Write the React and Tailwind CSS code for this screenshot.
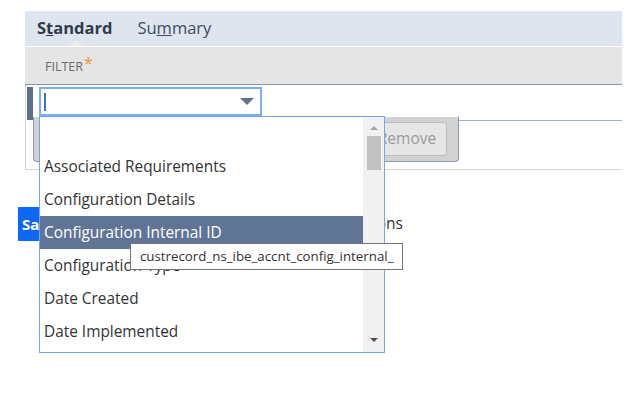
import React from "react";

const items = [
  "",
  "Associated Requirements",
  "Configuration Details",
  "Configuration Internal ID",
  "Configuration Type",
  "Date Created",
  "Date Implemented",
];

export default function App() {
  return (
    <div
      className="relative w-[640px] h-[400px] bg-white overflow-hidden text-[#333]"
      style={{ fontFamily: '"Open Sans", "Noto Sans", sans-serif' }}
    >
      <div className="pt-[11px] pl-[25px]">
        <div className="w-[597px]">
          {/* tabs */}
          <div className="relative h-[35px] bg-[#dfe5ee] flex items-center pl-[12px] gap-[25px] text-[16.5px]">
            <span className="font-bold text-[#2f3b4c]">
              S<span className="underline">t</span>andard
            </span>
            <span className="text-[#3d4b60]">
              Su<span className="underline">m</span>mary
            </span>
            <div className="absolute left-[44px] bottom-0 w-0 h-0 border-l-[7px] border-r-[7px] border-b-[6px] border-l-transparent border-r-transparent border-b-[#eeeeee]" />
          </div>
          {/* filter header */}
          <div className="mt-px h-[38px] bg-[#e5e5e5] border-b border-[#8397b5] flex items-center pt-[4px] pl-[20px] text-[12.5px] text-[#6b6b6b]">
            FILTER
            <span className="text-[#e39a2b] text-[16px] leading-none -mt-[9px] ml-px">*</span>
          </div>
          {/* body */}
          <div className="h-[85px] border-l border-b border-[#d4d4d4]">
            <div className="flex pt-[2px]">
              <div className="ml-[1px] w-[6px] h-[33px] bg-[#5a6f8f]" />
              <div className="ml-[6px] w-[223px] h-[29px] border-2 border-[#7aaef0] bg-white flex items-center justify-between pl-[3px] pr-[6px]">
                <div className="w-[2px] h-[18px] bg-[#3b6fd4]" />
                <div className="w-0 h-0 border-l-[7px] border-r-[7px] border-t-[7px] border-l-transparent border-r-transparent border-t-[#5f7390]" />
              </div>
            </div>
            <div className="flex -mt-[3px]">
              <div className="ml-[7px] w-[426px] h-[45px] bg-[#d2d2d2] border border-t-0 border-[#8a9ab0] rounded-b-[4px] flex justify-end items-start pt-[5px] pr-[11px]">
                <div className="w-[80px] h-[34px] bg-[#e6e6e6] border border-[#bdbdbd] rounded-[3px] flex items-center justify-center text-[15.5px] text-[#9a9a9a]">
                  Remove
                </div>
              </div>
              <div className="flex-1 border-t border-[#9fb1cc] mt-[3px]" />
            </div>
          </div>
        </div>
      </div>

      {/* action row */}
      <div className="mt-[37px] pl-[18px] flex items-center">
        <div className="w-[23px] h-[34px] bg-[#0f67f5] text-white font-bold text-[15px] flex items-center pl-[4px] overflow-hidden">
          Sa
        </div>
        <div className="w-[362px] text-right text-[15.5px] text-[#333]">Actions</div>
      </div>

      {/* dropdown */}
      <div className="absolute left-[39px] top-[116px] w-[346px] h-[237px] bg-white border border-[#74a7ea] flex">
        <div className="flex-1">
          {items.map((item, i) => (
            <div
              key={i}
              className={
                "h-[33px] flex items-center pl-[4px] pt-px text-[15.4px] whitespace-nowrap " +
                (i === 3 ? "bg-[#607595] text-white" : "text-[#333]")
              }
            >
              {item}
            </div>
          ))}
        </div>
        <div className="w-[21px] h-full bg-[#f1f1f1] flex flex-col items-center">
          <div className="mt-[9px] w-0 h-0 border-l-[4px] border-r-[4px] border-b-[4px] border-l-transparent border-r-transparent border-b-[#a3a3a3]" />
          <div className="mt-[6px] w-[14px] h-[34px] bg-[#c1c1c1]" />
          <div className="mt-auto mb-[10px] w-0 h-0 border-l-[4px] border-r-[4px] border-t-[4px] border-l-transparent border-r-transparent border-t-[#505050]" />
        </div>
      </div>

      {/* tooltip */}
      <div className="absolute left-[130px] top-[243px] w-[273px] h-[27px] bg-white border border-[#767676] flex items-center pl-[9px] text-[13.3px] text-[#333] whitespace-nowrap">
        custrecord_ns_ibe_accnt_config_internal_
      </div>
    </div>
  );
}
